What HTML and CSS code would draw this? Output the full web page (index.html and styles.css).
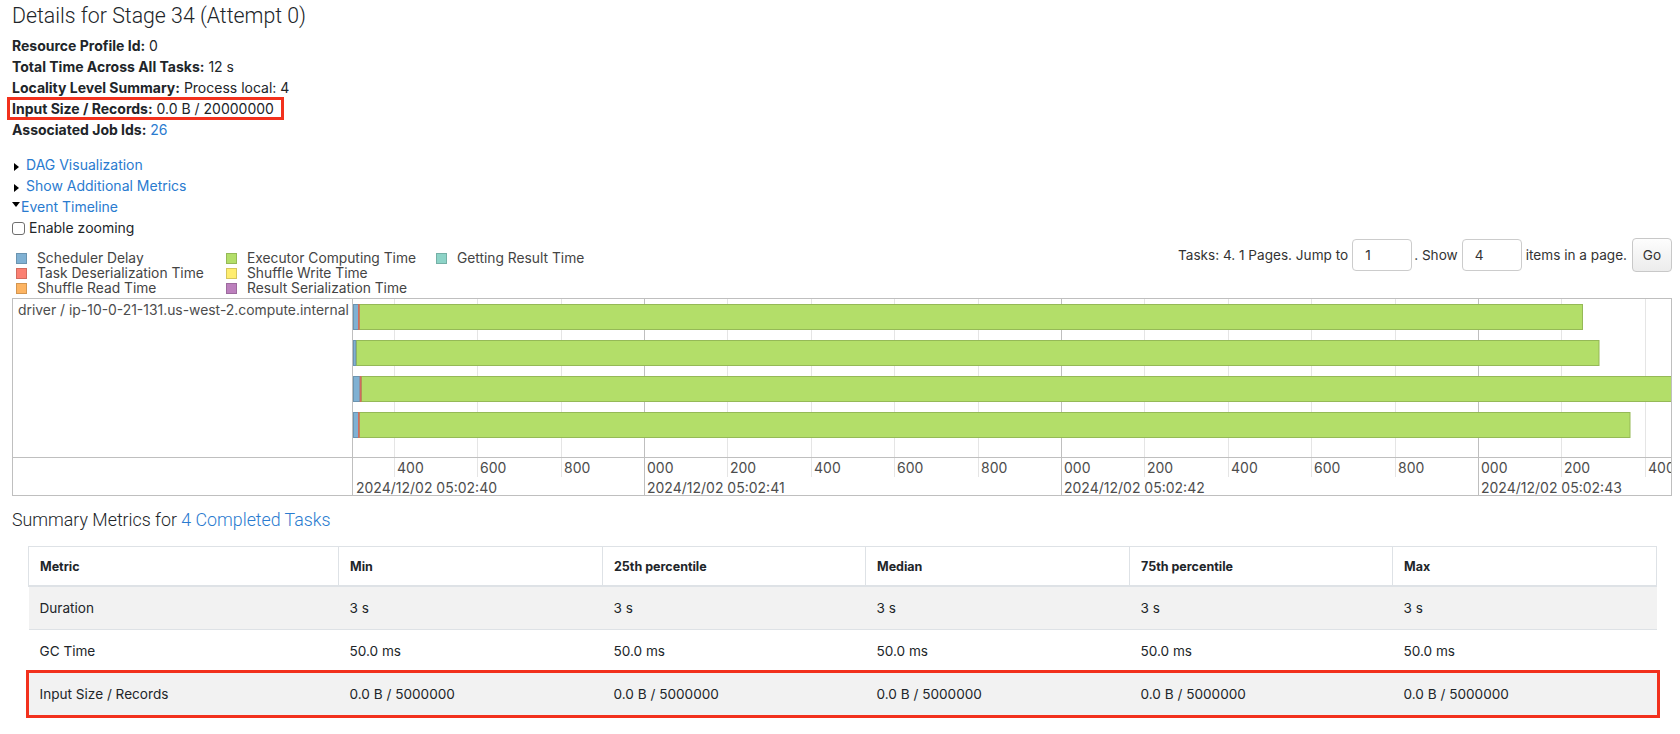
FILE: index.html
```html
<!DOCTYPE html>
<html lang="en">
<head>
<meta charset="utf-8">
<title>Details for Stage 34 (Attempt 0)</title>
<link rel="stylesheet" href="styles.css">
</head>
<body>
<div class="page">
  <h3 class="title">Details for Stage 34 (Attempt 0)</h3>
  <ul class="info">
    <li><strong>Resource Profile Id:</strong> 0</li>
    <li><strong>Total Time Across All Tasks:</strong> 12 s</li>
    <li><strong>Locality Level Summary:</strong> Process local: 4</li>
    <li><span class="mark"><strong>Input Size / Records:</strong> 0.0 B / 20000000</span></li>
    <li><strong>Associated Job Ids:</strong> <a href="#">26</a></li>
  </ul>

  <div class="toggles">
    <div class="toggle"><span class="arrow-closed"></span><a href="#">DAG Visualization</a></div>
    <div class="toggle"><span class="arrow-closed"></span><a href="#">Show Additional Metrics</a></div>
    <div class="toggle"><span class="arrow-open"></span><a href="#">Event Timeline</a></div>
    <div class="zoomline"><input type="checkbox" class="check"><span>Enable zooming</span></div>
  </div>

  <div class="legend-row">
    <div class="legend">
      <div class="lg"><span class="sw sched"></span>Scheduler Delay</div>
      <div class="lg"><span class="sw deser"></span>Task Deserialization Time</div>
      <div class="lg"><span class="sw sread"></span>Shuffle Read Time</div>
      <div class="lg"><span class="sw exec"></span>Executor Computing Time</div>
      <div class="lg"><span class="sw swrite"></span>Shuffle Write Time</div>
      <div class="lg"><span class="sw ser"></span>Result Serialization Time</div>
      <div class="lg"><span class="sw getres"></span>Getting Result Time</div>
    </div>
    <form class="paging" onsubmit="return false">
      <span>Tasks: 4. 1 Pages. Jump to</span>
      <input class="pg-input in-jump" type="text" value="1">
      <span class="pg-show">. Show</span>
      <input class="pg-input in-size" type="text" value="4">
      <span>items in a page.</span>
      <button class="go" type="button">Go</button>
    </form>
  </div>

  <div class="timeline">
    <div class="tl-row tl-bars">
      <div class="tl-label">driver / ip-10-0-21-131.us-west-2.compute.internal</div>
      <div class="tl-chart">
        <svg class="chart" width="1318" height="159" viewBox="0 0 1318 159">
          <g class="minor">
            <line x1="41.5" y1="0" x2="41.5" y2="159"/>
            <line x1="124.5" y1="0" x2="124.5" y2="159"/>
            <line x1="208.5" y1="0" x2="208.5" y2="159"/>
            <line x1="374.5" y1="0" x2="374.5" y2="159"/>
            <line x1="458.5" y1="0" x2="458.5" y2="159"/>
            <line x1="541.5" y1="0" x2="541.5" y2="159"/>
            <line x1="625.5" y1="0" x2="625.5" y2="159"/>
            <line x1="791.5" y1="0" x2="791.5" y2="159"/>
            <line x1="875.5" y1="0" x2="875.5" y2="159"/>
            <line x1="958.5" y1="0" x2="958.5" y2="159"/>
            <line x1="1042.5" y1="0" x2="1042.5" y2="159"/>
            <line x1="1208.5" y1="0" x2="1208.5" y2="159"/>
            <line x1="1292.5" y1="0" x2="1292.5" y2="159"/>
          </g>
          <g class="major">
            <line x1="291.5" y1="0" x2="291.5" y2="159"/>
            <line x1="708.5" y1="0" x2="708.5" y2="159"/>
            <line x1="1125.5" y1="0" x2="1125.5" y2="159"/>
          </g>
          <g class="bar">
            <rect class="p-exec" x="6.5" y="5.5" width="1223" height="25"/>
            <rect class="p-sched" x="0.5" y="5.5" width="5" height="25"/>
            <rect class="p-deser" x="5.5" y="5.5" width="0.6" height="25"/>
          </g>
          <g class="bar">
            <rect class="p-exec" x="3.5" y="41.5" width="1242.5" height="25"/>
            <rect class="p-sched" x="0.5" y="41.5" width="2.2" height="25"/>
          </g>
          <g class="bar">
            <rect class="p-exec" x="8.5" y="77.5" width="1330" height="25"/>
            <rect class="p-sched" x="0.5" y="77.5" width="6.5" height="25"/>
            <rect class="p-deser" x="7.2" y="77.5" width="0.8" height="25"/>
          </g>
          <g class="bar">
            <rect class="p-exec" x="6.5" y="113.5" width="1270.5" height="25"/>
            <rect class="p-sched" x="0.5" y="113.5" width="5" height="25"/>
            <rect class="p-deser" x="5.5" y="113.5" width="0.6" height="25"/>
          </g>
        </svg>
      </div>
    </div>
    <div class="tl-row tl-axis">
      <div class="tl-label"></div>
      <div class="tl-chart">
        <svg class="chart" width="1318" height="37" viewBox="0 0 1318 37">
          <g class="minor">
            <line x1="41.5" y1="0" x2="41.5" y2="19"/>
            <line x1="124.5" y1="0" x2="124.5" y2="19"/>
            <line x1="208.5" y1="0" x2="208.5" y2="19"/>
            <line x1="374.5" y1="0" x2="374.5" y2="19"/>
            <line x1="458.5" y1="0" x2="458.5" y2="19"/>
            <line x1="541.5" y1="0" x2="541.5" y2="19"/>
            <line x1="625.5" y1="0" x2="625.5" y2="19"/>
            <line x1="791.5" y1="0" x2="791.5" y2="19"/>
            <line x1="875.5" y1="0" x2="875.5" y2="19"/>
            <line x1="958.5" y1="0" x2="958.5" y2="19"/>
            <line x1="1042.5" y1="0" x2="1042.5" y2="19"/>
            <line x1="1208.5" y1="0" x2="1208.5" y2="19"/>
            <line x1="1292.5" y1="0" x2="1292.5" y2="19"/>
          </g>
          <g class="major">
            <line x1="291.5" y1="0" x2="291.5" y2="37"/>
            <line x1="708.5" y1="0" x2="708.5" y2="37"/>
            <line x1="1125.5" y1="0" x2="1125.5" y2="37"/>
          </g>
          <g class="axis-text">
            <text x="44" y="15">400</text>
            <text x="127" y="15">600</text>
            <text x="211" y="15">800</text>
            <text x="294" y="15">000</text>
            <text x="377" y="15">200</text>
            <text x="461" y="15">400</text>
            <text x="544" y="15">600</text>
            <text x="628" y="15">800</text>
            <text x="711" y="15">000</text>
            <text x="794" y="15">200</text>
            <text x="878" y="15">400</text>
            <text x="961" y="15">600</text>
            <text x="1045" y="15">800</text>
            <text x="1128" y="15">000</text>
            <text x="1211" y="15">200</text>
            <text x="1295" y="15">400</text>
            <text x="3" y="35">2024/12/02 05:02:40</text>
            <text x="294" y="35">2024/12/02 05:02:41</text>
            <text x="711" y="35">2024/12/02 05:02:42</text>
            <text x="1128" y="35">2024/12/02 05:02:43</text>
          </g>
        </svg>
      </div>
    </div>
  </div>

  <h4 class="summary-title">Summary Metrics for <a href="#">4 Completed Tasks</a></h4>

  <table class="metrics">
    <colgroup>
      <col class="col-first">
      <col class="col-a">
      <col class="col-b">
      <col class="col-a">
      <col class="col-b">
      <col class="col-a">
    </colgroup>
    <thead>
      <tr><th>Metric</th><th>Min</th><th>25th percentile</th><th>Median</th><th>75th percentile</th><th>Max</th></tr>
    </thead>
    <tbody>
      <tr class="stripe"><td>Duration</td><td>3 s</td><td>3 s</td><td>3 s</td><td>3 s</td><td>3 s</td></tr>
      <tr><td>GC Time</td><td>50.0 ms</td><td>50.0 ms</td><td>50.0 ms</td><td>50.0 ms</td><td>50.0 ms</td></tr>
      <tr class="stripe hl"><td>Input Size / Records</td><td>0.0 B / 5000000</td><td>0.0 B / 5000000</td><td>0.0 B / 5000000</td><td>0.0 B / 5000000</td><td>0.0 B / 5000000</td></tr>
    </tbody>
  </table>
</div>
</body>
</html>
```

FILE: styles.css
```css
* { box-sizing: border-box; }
html, body { margin: 0; padding: 0; background: #ffffff; }
html { min-height: 100%; }
body {
  min-height: 734px;
  font-family: Inter, "Noto Sans", sans-serif;
  font-size: 14px;
  line-height: 21px;
  color: #212529;
}
a { color: #2a7bcf; text-decoration: none; }

.page { padding: 0 8px 16px 12px; }

.title {
  margin: 0 0 5px;
  padding-top: 1px;
  font-family: Roboto, Inter, sans-serif;
  font-size: 21.3px;
  line-height: 29px;
  font-weight: 300;
  color: #212529;
}

.info { list-style: none; margin: 0; padding: 0; }
.info strong { font-weight: 700; }
.mark {
  display: inline-block;
  line-height: 19px;
  padding: 0 8px 0 3px;
  margin-left: -3px;
  outline: 3px solid #f2311d;
  outline-offset: -1px;
}

.toggles { margin-top: 14px; }
.toggle, .zoomline { line-height: 21px; }
.arrow-closed {
  display: inline-block;
  width: 0; height: 0;
  border-top: 4px solid transparent;
  border-bottom: 4px solid transparent;
  border-left: 5px solid #000;
  margin: 0 7px -1px 2px;
  vertical-align: baseline;
}
.arrow-open {
  display: inline-block;
  width: 0; height: 0;
  border-left: 4.5px solid transparent;
  border-right: 4.5px solid transparent;
  border-top: 5px solid #000;
  margin: 0 1px 5px 0;
  vertical-align: baseline;
}
.check {
  -webkit-appearance: none;
  appearance: none;
  width: 13px; height: 13px;
  margin: 0 4px 0 0;
  border: 1px solid #6e6e6e;
  border-radius: 3px;
  background: #fff;
  vertical-align: -2px;
}

.legend-row {
  display: flex;
  justify-content: space-between;
  align-items: flex-start;
}
.legend {
  padding: 12.5px 0 0 4px;
  display: grid;
  grid-template-rows: repeat(3, 15px);
  grid-auto-flow: column;
  grid-auto-columns: 210px;
}
.lg {
  display: flex;
  align-items: center;
  font-size: 13.8px;
  line-height: 15px;
  color: #444;
  white-space: nowrap;
}
.sw {
  width: 11px; height: 11px;
  margin-right: 10px;
  border: 1px solid;
  flex: none;
}
.sched { background: #80B1D3; border-color: #6B94B0; }
.deser { background: #FB8072; border-color: #D26B5F; }
.sread { background: #FDB462; border-color: #D39651; }
.exec { background: #B3DE69; border-color: #95B957; }
.swrite { background: #FFED6F; border-color: #D5C65C; }
.ser { background: #BC80BD; border-color: #9D6B9E; }
.getres { background: #8DD3C7; border-color: #75B0A6; }

.paging {
  display: flex;
  align-items: center;
  height: 34px;
  margin: 0;
  font-size: 13.6px;
  color: #333;
}
.pg-input {
  width: 60px; height: 32px;
  margin: 0 2px 0 4px;
  padding: 0 12px;
  border: 1px solid #cccccc;
  border-radius: 4px;
  font: inherit;
  color: #333;
  background: #fff;
}
.in-size { margin: 0 4px 0 4px; }
.go {
  width: 40px; height: 34px;
  margin-left: 5px;
  border: 1px solid #c8c8c8;
  border-radius: 4px;
  background: linear-gradient(#fdfdfd, #ececec);
  font: inherit;
  color: #333;
  padding: 0;
}

.timeline {
  margin-top: 2.5px;
  border: 1px solid #bfbfbf;
}
.tl-row { display: flex; }
.tl-bars { height: 159px; border-bottom: 1px solid #bfbfbf; }
.tl-axis { height: 37px; }
.tl-label {
  width: 340px;
  flex: none;
  border-right: 1px solid #bfbfbf;
  padding: 3px 5px;
  font-size: 13.9px;
  line-height: 17px;
  color: #4d4d4d;
  white-space: nowrap;
  overflow: hidden;
}
.tl-chart { flex: 1; overflow: hidden; }
.chart { display: block; overflow: hidden; }
.minor line { stroke: #e5e5e5; stroke-width: 1; }
.major line { stroke: #bfbfbf; stroke-width: 1; }
.bar rect { stroke-width: 1; }
.p-sched { fill: #80B1D3; stroke: #6B94B0; }
.p-deser { fill: #FB8072; stroke: #D26B5F; }
.p-exec { fill: #B3DE69; stroke: #95B957; }
.axis-text text {
  font-family: Inter, "Noto Sans", sans-serif;
  font-size: 14px;
  fill: #4d4d4d;
}

.summary-title {
  margin: 12px 0 14px;
  font-family: Roboto, Inter, sans-serif;
  font-size: 17.8px;
  line-height: 24px;
  font-weight: 300;
  color: #212529;
}

.metrics {
  margin: 0 16px;
  width: 1628px;
  border-collapse: collapse;
  table-layout: fixed;
}
.col-first { width: 310px; }
.col-a { width: 264px; }
.col-b { width: 263px; }
.metrics th {
  text-align: left;
  font-size: 12.5px;
  font-weight: 700;
  line-height: 21px;
  padding: 9px 11px 8px;
  border: 1px solid #dee2e6;
  border-bottom: 2px solid #dee2e6;
  color: #212529;
}
.metrics td {
  padding: 11px 11px 10px;
  font-size: 13.6px;
  line-height: 21px;
  border-top: 1px solid #dee2e6;
  color: #212529;
}
.metrics tr.stripe { background: #f2f2f2; }
.metrics tr.hl {
  outline: 3px solid #f2311d;
  outline-offset: 0px;
}
```
